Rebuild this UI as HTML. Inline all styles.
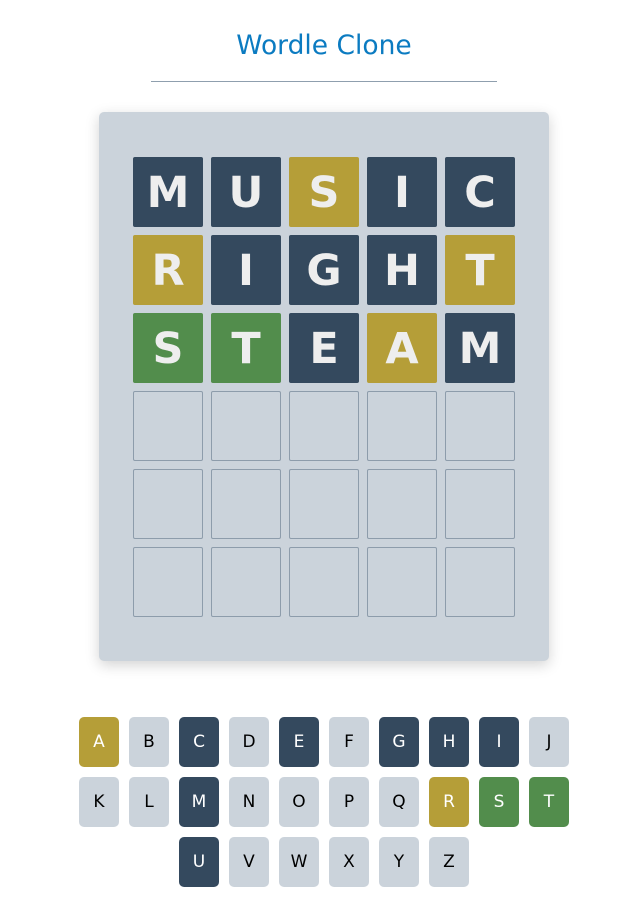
<!DOCTYPE html>
<html><head><meta charset="utf-8"><style>
body{margin:0;width:630px;height:917px;background:#fff;font-family:"DejaVu Sans","Liberation Sans",sans-serif;position:relative;overflow:hidden}
h1{position:absolute;top:29px;left:9px;width:630px;text-align:center;margin:0;font-weight:normal;font-size:26.5px;color:#0b7bc1;line-height:34px}
.hr{position:absolute;left:151px;width:346px;top:81px;height:1px;background:#8f9fae}
.board{position:absolute;left:99px;top:112px;width:450px;height:549px;background:#cbd3db;border-radius:5px;box-shadow:0 4px 14px rgba(0,0,0,.18)}
.t{position:absolute;width:70px;height:70px;border-radius:2px;color:#eee;font-weight:bold;font-size:43px;text-align:center;line-height:72px}
.e{box-sizing:border-box;border:1px solid #8d9cab}
.d{background:#34495e}.y{background:#b59e38}.g{background:#528d4c}
.k{position:absolute;width:40px;height:50px;border-radius:5px;background:#cbd3db;text-align:center;line-height:50px;font-size:17px;color:#000}
.k.d{background:#34495e;color:#fff}.k.y{background:#b59e38;color:#fff}.k.g{background:#528d4c;color:#fff}
</style></head><body>
<h1>Wordle Clone</h1><div class="hr"></div>
<div class="board"></div>
<div id="tiles"></div>
<script>
const rows=[["M","d","U","d","S","y","I","d","C","d"],["R","y","I","d","G","d","H","d","T","y"],["S","g","T","g","E","d","A","y","M","d"]];
let h="";
for(let r=0;r<6;r++)for(let c=0;c<5;c++){const x=133+c*78,y=157+r*78;
if(r<3)h+=`<div class="t ${rows[r][c*2+1]}" style="left:${x}px;top:${y}px">${rows[r][c*2]}</div>`;
else h+=`<div class="t e" style="left:${x}px;top:${y}px"></div>`;}
const st={A:"y",C:"d",E:"d",G:"d",H:"d",I:"d",M:"d",R:"y",S:"g",T:"g",U:"d"};
const kr=["ABCDEFGHIJ","KLMNOPQRST","UVWXYZ"];
kr.forEach((s,i)=>{const x0=i==2?179:79;[...s].forEach((ch,j)=>{h+=`<div class="k ${st[ch]||""}" style="left:${x0+j*50}px;top:${717+i*60}px">${ch}</div>`;});});
document.getElementById("tiles").innerHTML=h;
</script>
</body></html>
